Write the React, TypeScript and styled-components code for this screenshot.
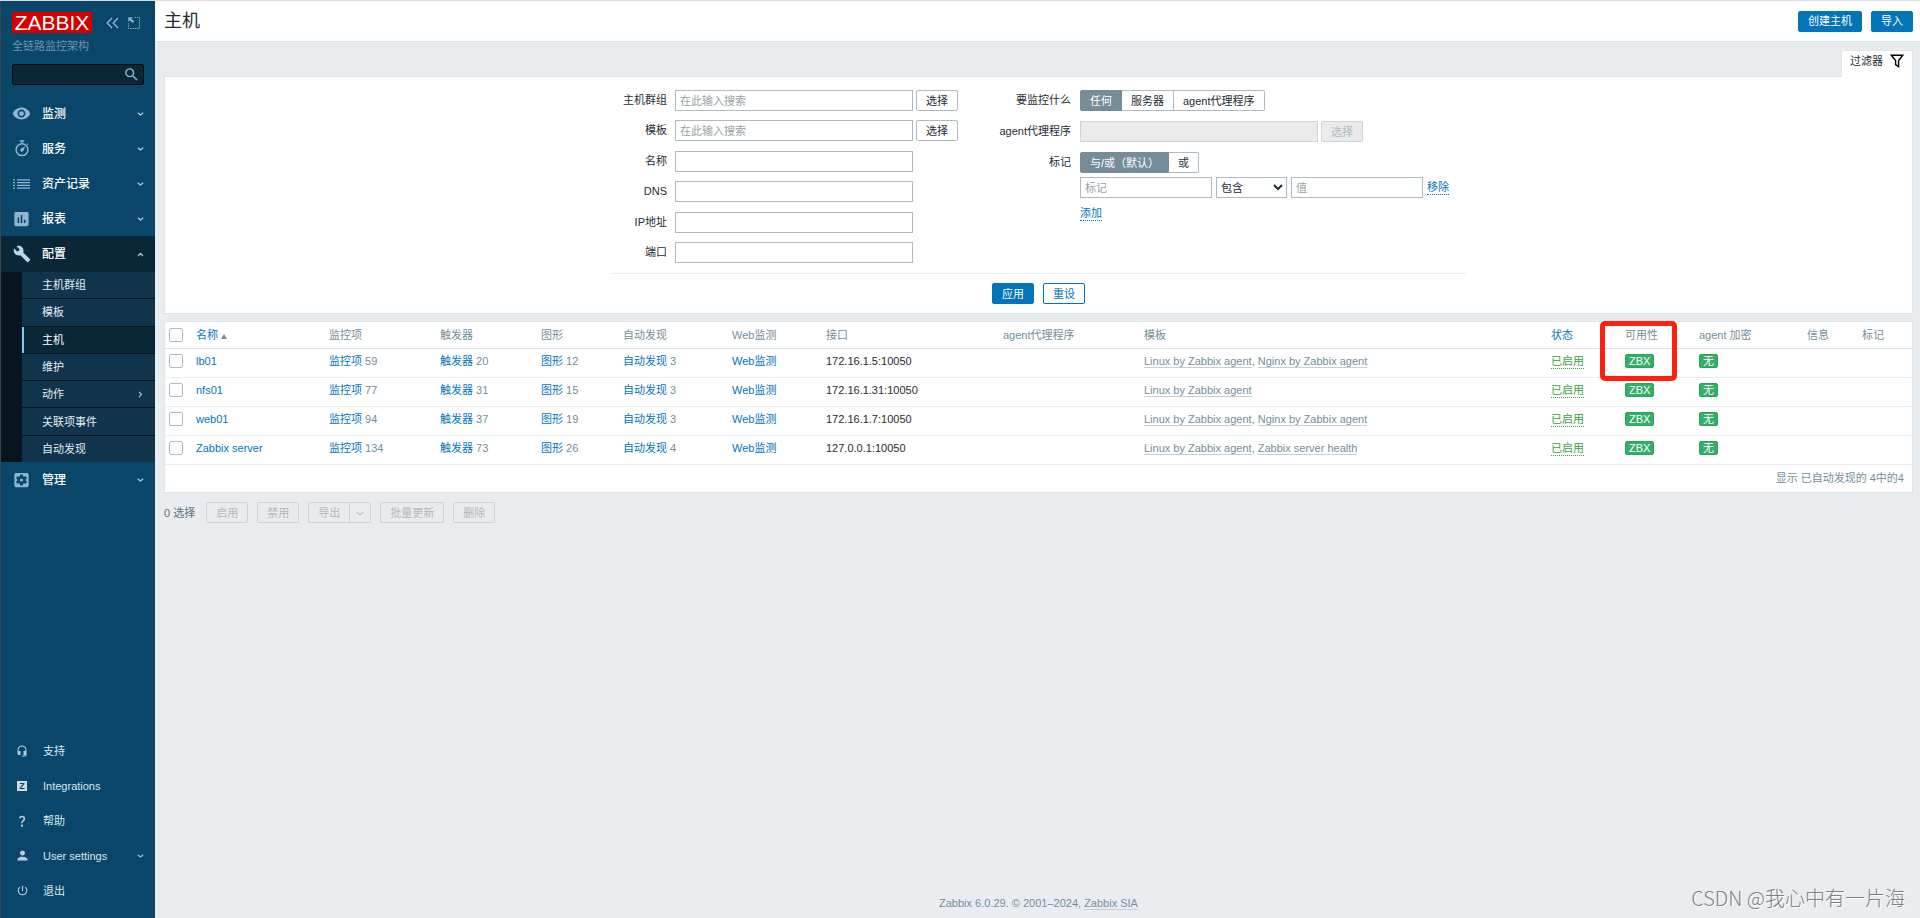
import React from 'react';
import styled, { createGlobalStyle, css } from 'styled-components';
import {
  MdAssessment,
  MdBuild,
  MdHeadsetMic,
  MdPerson,
  MdPowerSettingsNew,
  MdQuestionMark,
  MdSearch,
  MdSettingsApplications,
  MdVisibility,
} from 'react-icons/md';

const c = {
  bg: '#e9edf0',
  line: '#dfe4e7',
  rowLine: '#ebeef0',
  text: '#1f2c33',
  grey: '#768d99',
  blue: '#0275b8',
  field: '#acbbc2',
  green: '#429e47',
  badge: '#34af67',
  side: '#0a466a',
  sideDark: '#0a2737',
  sideIcon: '#8fb5cf',
};

const GlobalStyle = createGlobalStyle`
  * { box-sizing: border-box; }
  body {
    margin: 0;
    background: ${c.bg};
    color: ${c.text};
  }
  body, button, input, select {
    font-family: "Liberation Sans", Arial, "Noto Sans CJK SC", sans-serif;
    font-size: 11px;
    line-height: 14px;
  }
  ul { list-style: none; margin: 0; padding: 0; }
  a { text-decoration: none; color: inherit; }
  svg { display: block; }
`;

const Page = styled.div`
  position: relative;
  display: flex;
  min-height: 100vh;
  border-top: 1px solid #dedede;
`;

/* ---------- Sidebar ---------- */

const Sidebar = styled.aside`
  flex: 0 0 155px;
  min-width: 0;
  display: flex;
  flex-direction: column;
  background: ${c.side};
  border-left: 1px solid #3f4447;
  padding: 11px 0 10px;
`;

const SideTop = styled.div`
  padding: 0 11px;
`;

const LogoRow = styled.div`
  display: flex;
  align-items: center;
`;

const Logo = styled.a`
  width: 80px;
  height: 21px;
  background: #d40000;
  color: #fff;
  font-size: 21px;
  line-height: 21px;
  text-align: center;
`;

const IconButton = styled.button`
  border: 0;
  padding: 0;
  background: none;
  color: ${c.sideIcon};
`;

const CollapseButton = styled(IconButton)`
  margin: 0 9px 0 14px;
`;

const ServerName = styled.div`
  margin-top: 6px;
  color: #6d93ab;
`;

const SearchBox = styled.form`
  display: flex;
  align-items: center;
  height: 21px;
  margin: 11px 0;
  padding-right: 3px;
  background: ${c.sideDark};
  border: 1px solid #020a0f;
  border-radius: 2px;
`;

const SearchInput = styled.input`
  flex: 1;
  width: 0;
  min-width: 0;
  border: 0;
  background: none;
  color: #fff;
`;

const NavLink = styled.a<{ $open?: boolean }>`
  display: flex;
  align-items: center;
  height: ${(p) => (p.$open ? 36 : 35)}px;
  padding: 0 11px;
  color: #fff;
  font-size: 12px;
  font-weight: 500;
  background: ${(p) => (p.$open ? c.sideDark : 'none')};
`;

const NavIcon = styled.span<{ $bright?: boolean }>`
  display: flex;
  justify-content: center;
  width: 19px;
  margin-right: 11px;
  color: ${(p) => (p.$bright ? '#b9d8ec' : c.sideIcon)};
`;

const NavLabel = styled.span`
  flex: 1;
`;

const Submenu = styled.ul`
  display: flex;
  flex-direction: column;
  min-height: 190px;
  padding-left: 21px;
  background: #06151e;
`;

const SubItem = styled.li`
  flex: 1;
  display: flex;
  & + & { border-top: 1px solid #06151e; }
`;

const SubLink = styled.a<{ $active?: boolean }>`
  flex: 1;
  display: flex;
  align-items: center;
  padding: 0 11px 0 18px;
  border-left: 2px solid ${(p) => (p.$active ? '#7cc9f5' : '#10344c')};
  background: ${(p) => (p.$active ? c.sideDark : '#10344c')};
  color: ${(p) => (p.$active ? '#fff' : '#e3edf3')};
`;

const BottomNav = styled.ul`
  margin-top: auto;
`;

const BottomLink = styled.a`
  display: flex;
  align-items: center;
  height: 35px;
  padding: 0 11px;
  color: #dbe6ec;
`;

const BottomIcon = styled.span`
  display: flex;
  justify-content: center;
  width: 20px;
  margin-right: 11px;
  color: #b9ccd8;
`;

const ZBox = styled.span`
  width: 10px;
  height: 10px;
  background: #cddbe3;
  color: ${c.side};
  font-size: 9px;
  font-weight: bold;
  line-height: 11px;
  text-align: center;
`;

/* ---------- Main ---------- */

const Main = styled.div`
  flex: 1;
  min-width: 0;
  display: flex;
  flex-direction: column;
`;

const Header = styled.header`
  display: flex;
  align-items: center;
  justify-content: space-between;
  height: 41px;
  padding: 0 7px 0 9px;
  background: #fff;
  border-bottom: 1px solid ${c.line};
`;

const Title = styled.h1`
  margin: 0;
  font-size: 18px;
  line-height: 24px;
  font-weight: normal;
`;

const ButtonRow = styled.div`
  display: flex;
  justify-content: center;
  gap: 9px;
`;

type Kind = 'primary' | 'outline' | 'plain';

const Button = styled.button<{ $kind?: Kind }>`
  height: 21px;
  padding: 0 9px;
  line-height: 18px;
  white-space: nowrap;
  border-radius: 2px;
  border: 1px solid ${c.blue};
  background: ${(p) => (p.$kind === 'primary' ? c.blue : '#fff')};
  color: ${(p) => (p.$kind === 'primary' ? '#fff' : c.blue)};
  ${(p) => p.$kind === 'plain' && css`
    border-color: ${c.field};
    color: ${c.text};
  `}
  &:disabled {
    background: #ebebeb;
    border-color: #ccd5d9;
    color: ${c.field};
  }
`;

const Content = styled.main`
  padding: 8px 7px 0 9px;
`;

const TabBar = styled.div`
  display: flex;
  justify-content: flex-end;
`;

const FilterTab = styled.button`
  position: relative;
  z-index: 1;
  display: flex;
  justify-content: space-between;
  width: 72px;
  height: 27px;
  margin-bottom: -1px;
  padding: 3px 8px 0 8px;
  background: #fff;
  color: ${c.text};
  border: 1px solid ${c.line};
  border-bottom: 0;
`;

const Panel = styled.section`
  position: relative;
  background: #fff;
  border: 1px solid ${c.line};
  margin-bottom: 7px;
`;

const FilterForm = styled.form`
  max-width: 855px;
  margin: 0 auto;
  padding: 13px 0 9px;
`;

const FilterColumns = styled.div`
  display: flex;
  gap: 32px;
  padding-bottom: 10px;
  border-bottom: 1px solid ${c.rowLine};
  margin-bottom: 9px;
`;

const LeftFields = styled.div`
  display: flex;
  flex-direction: column;
  justify-content: space-between;
  min-height: 173px;
`;

const RightFields = styled.div`
  display: flex;
  flex-direction: column;
  gap: 10px;
`;

const FieldRow = styled.div`
  display: flex;
`;

const FieldLabel = styled.label<{ $wide?: boolean }>`
  width: ${(p) => (p.$wide ? 81 : 56)}px;
  margin-right: ${(p) => (p.$wide ? 9 : 8)}px;
  line-height: 21px;
  text-align: right;
  white-space: nowrap;
`;

const TextInput = styled.input<{ $short?: boolean }>`
  width: ${(p) => (p.$short ? 132 : 238)}px;
  height: 21px;
  padding: 0 4px;
  border: 1px solid ${c.field};
  border-radius: 0;
  background: #fff;
  &::placeholder { color: #9a9fa3; }
  &:disabled { background: #ebebeb; border-color: #ccd5d9; }
`;

const PickButton = styled(Button)`
  margin-left: 3px;
`;

const Segments = styled.div`
  display: flex;
`;

const Segment = styled.label`
  display: block;
  & input {
    position: absolute;
    opacity: 0;
    pointer-events: none;
  }
  & span {
    display: block;
    height: 21px;
    padding: 0 9px;
    line-height: 20px;
    border: 1px solid ${c.field};
    border-left-width: 0;
    white-space: nowrap;
  }
  &:last-child span { border-radius: 0 2px 2px 0; }
  &:first-child span { border-radius: 2px 0 0 2px; border-left-width: 1px; }
  & input:checked + span {
    background: ${c.grey};
    border-color: ${c.grey};
    color: #fff;
  }
`;

const TagFields = styled.div`
  display: flex;
  flex-direction: column;
  align-items: flex-start;
  gap: 4px;
`;

const TagRow = styled.div`
  display: flex;
  align-items: center;
  gap: 4px;
`;

const Select = styled.select`
  width: 71px;
  height: 21px;
  border: 1px solid ${c.field};
  border-radius: 0;
  background: #fff;
  color: ${c.text};
`;

const DottedButton = styled.button<{ $green?: boolean }>`
  padding: 0;
  border: 0;
  border-bottom: 1px dotted ${(p) => (p.$green ? c.green : c.blue)};
  background: none;
  color: ${(p) => (p.$green ? c.green : c.blue)};
  line-height: 14px;
`;

const AddButton = styled(DottedButton)`
  margin-top: 4px;
`;

/* ---------- Table ---------- */

const Table = styled.table`
  width: 100%;
  table-layout: fixed;
  border-collapse: separate;
  border-spacing: 0;
`;

const Col = styled.col<{ $w?: number }>`
  width: ${(p) => (p.$w ? `${p.$w}px` : 'auto')};
`;

const Th = styled.th`
  height: 27px;
  padding: 0 5px;
  font-weight: normal;
  text-align: left;
  white-space: nowrap;
  color: ${c.grey};
  border-bottom: 1px solid ${c.line};
`;

const Td = styled.td`
  height: 29px;
  padding: 5px 5px 0;
  vertical-align: top;
  white-space: nowrap;
  border-bottom: 1px solid ${c.rowLine};
  color: ${c.grey};
`;

const InterfaceCell = styled(Td)`
  color: ${c.text};
`;

const Link = styled.a`
  color: ${c.blue};
`;

const GreyLink = styled.a`
  color: ${c.grey};
  border-bottom: 1px solid #c5cfd4;
`;

const SortArrow = styled.span`
  display: inline-block;
  margin-left: 3px;
  border: 3px solid transparent;
  border-top: 0;
  border-bottom: 5px solid ${c.grey};
`;

const Checkbox = styled.input`
  appearance: none;
  display: block;
  width: 14px;
  height: 14px;
  margin: 0 0 0 -1px;
  border: 1px solid ${c.field};
  border-radius: 2px;
  background: #fff;
`;

const Badge = styled.span`
  display: inline-block;
  height: 14px;
  padding: 0 3px;
  border: 1px solid #2f9f5e;
  border-radius: 2px;
  background: ${c.badge};
  color: #fff;
  line-height: 12px;
  vertical-align: top;
`;

const TableFooter = styled.div`
  height: 27px;
  padding: 0 8px;
  line-height: 27px;
  text-align: right;
  color: ${c.grey};
`;

const Highlight = styled.div`
  position: absolute;
  top: -1px;
  right: 235px;
  width: 77px;
  height: 60px;
  border: 5px solid #ff2012;
  border-radius: 5px;
  pointer-events: none;
`;

const Actions = styled.div`
  display: flex;
  align-items: center;
  gap: 9px;
  margin-top: 9px;
`;

const Selected = styled.span`
  color: #5d7480;
  margin-right: 2px;
`;

const SplitButton = styled.div`
  display: flex;
  & button:first-child { border-radius: 2px 0 0 2px; }
  & button:last-child {
    margin-left: -1px;
    padding: 0 6px;
    border-radius: 0 2px 2px 0;
  }
`;

const PageFooter = styled.footer`
  margin-top: auto;
  padding: 0 7px 8px 9px;
  text-align: center;
  color: ${c.grey};
`;

const Watermark = styled.div`
  position: absolute;
  right: 15px;
  bottom: 7px;
  font-family: "Noto Sans CJK SC", sans-serif;
  font-size: 20px;
  font-weight: 300;
  line-height: 26px;
  color: #7d8184;
  text-shadow: 1px 1px 0 #fff;
`;

/* ---------- Icons ---------- */

const ChevronSvg = styled.svg`
  opacity: 0.75;
`;

const Chevron = ({ dir = 'down', size = 7 }: { dir?: 'down' | 'up' | 'right'; size?: number }) => (
  <ChevronSvg width={size} height={size} viewBox="0 0 7 7" fill="none" stroke="currentColor" strokeWidth="1.1">
    <path d={{ down: 'M.8 2.8 3.5 5 6.2 2.8', up: 'M1 5 3.5 2.4 6 5', right: 'M2 1 4.6 3.5 2 6' }[dir]} />
  </ChevronSvg>
);

const CollapseIcon = () => (
  <svg width="13" height="12" viewBox="0 0 13 12" fill="none" stroke="currentColor" strokeWidth="1.4">
    <path d="M6 1 1.2 6 6 11M12 1 7.2 6 12 11" />
  </svg>
);

const CompactIcon = () => (
  <svg width="12" height="12" viewBox="0 0 12 12" fill="none" stroke="currentColor">
    <path d="M6.5.5H11.5V11.5H.5V6.5" strokeDasharray="1.4 1" />
    <path d="M.3.3H5L3.5 1.8 6.2 4.6 4.8 6 1.9 3.3.3 5z" fill="currentColor" stroke="none" />
  </svg>
);

const StopwatchIcon = () => (
  <svg width="14" height="17" viewBox="0 0 14 17" fill="none" stroke="currentColor">
    <circle cx="7" cy="9.7" r="5.9" strokeWidth="1.5" />
    <path d="M4.8.9H9.2" strokeWidth="1.5" />
    <path d="M7 1V3.5M11.8 3.6 12.8 4.6" strokeWidth="1.3" />
    <path d="M10.2 6.3 8.3 11A1.7 1.7 0 1 1 5.8 8.7z" fill="currentColor" stroke="none" />
  </svg>
);

const ListIcon = () => (
  <svg width="17" height="10" viewBox="0 0 17 10" fill="none" stroke="currentColor" strokeWidth="1.3">
    <path d="M4 .8H17M4 3.6H17M4 6.4H17M4 9.2H17" />
    <path d="M0 .8H2M0 3.6H2M0 6.4H2M0 9.2H2" />
  </svg>
);

const FunnelIcon = () => (
  <svg width="14" height="14" viewBox="0 0 14 14" fill="none" stroke="#000" strokeWidth="1.4">
    <path d="M1.3 1.2H12.7L8.6 6.5V12.6L5.6 10.6V6.5z" />
  </svg>
);

/* ---------- Data ---------- */

const subItems = ['主机群组', '模板', '主机', '维护', '动作', '关联项事件', '自动发现'];

const leftFields = [
  { id: 'groups', label: '主机群组', pick: true },
  { id: 'templates', label: '模板', pick: true },
  { id: 'name', label: '名称' },
  { id: 'dns', label: 'DNS' },
  { id: 'ip', label: 'IP地址' },
  { id: 'port', label: '端口' },
];

const columnWidths = [26, 133, 111, 101, 82, 109, 94, 177, 141, undefined, 74, 74, 108, 55, 55];

const hosts = [
  { name: 'lb01', items: 59, triggers: 20, graphs: 12, discovery: 3, iface: '172.16.1.5:10050', templates: ['Linux by Zabbix agent', 'Nginx by Zabbix agent'] },
  { name: 'nfs01', items: 77, triggers: 31, graphs: 15, discovery: 3, iface: '172.16.1.31:10050', templates: ['Linux by Zabbix agent'] },
  { name: 'web01', items: 94, triggers: 37, graphs: 19, discovery: 3, iface: '172.16.1.7:10050', templates: ['Linux by Zabbix agent', 'Nginx by Zabbix agent'] },
  { name: 'Zabbix server', items: 134, triggers: 73, graphs: 26, discovery: 4, iface: '127.0.0.1:10050', templates: ['Linux by Zabbix agent', 'Zabbix server health'] },
];

interface NavItemProps {
  icon: React.ReactNode;
  label: string;
  open?: boolean;
}

const NavItem = ({ icon, label, open }: NavItemProps) => (
  <NavLink href="#" $open={open}>
    <NavIcon $bright={open}>{icon}</NavIcon>
    <NavLabel>{label}</NavLabel>
    <Chevron dir={open ? 'up' : 'down'} />
  </NavLink>
);

const BottomItem = ({ icon, label, more }: { icon: React.ReactNode; label: string; more?: boolean }) => (
  <li>
    <BottomLink href="#">
      <BottomIcon>{icon}</BottomIcon>
      <NavLabel>{label}</NavLabel>
      {more && <Chevron />}
    </BottomLink>
  </li>
);

const SegmentGroup = ({ name, label, options }: { name: string; label: string; options: string[] }) => (
  <Segments role="radiogroup" aria-label={label}>
    {options.map((option, i) => (
      <Segment key={option}>
        <input type="radio" name={name} defaultChecked={i === 0} />
        <span>{option}</span>
      </Segment>
    ))}
  </Segments>
);

export default function App() {
  return (
    <Page>
      <GlobalStyle />
      <Sidebar>
        <SideTop>
          <LogoRow>
            <Logo href="#">ZABBIX</Logo>
            <CollapseButton aria-label="折叠"><CollapseIcon /></CollapseButton>
            <IconButton aria-label="隐藏"><CompactIcon /></IconButton>
          </LogoRow>
          <ServerName>全链路监控架构</ServerName>
          <SearchBox>
            <SearchInput aria-label="搜索" />
            <IconButton type="button" aria-label="搜索"><MdSearch size={17} /></IconButton>
          </SearchBox>
        </SideTop>
        <nav>
          <NavItem icon={<MdVisibility size={21} />} label="监测" />
          <NavItem icon={<StopwatchIcon />} label="服务" />
          <NavItem icon={<ListIcon />} label="资产记录" />
          <NavItem icon={<MdAssessment size={22} />} label="报表" />
          <NavItem icon={<MdBuild size={18} />} label="配置" open />
          <Submenu>
            {subItems.map((item) => (
              <SubItem key={item}>
                <SubLink href="#" $active={item === '主机'}>
                  <NavLabel>{item}</NavLabel>
                  {item === '动作' && <Chevron dir="right" />}
                </SubLink>
              </SubItem>
            ))}
          </Submenu>
          <NavItem icon={<MdSettingsApplications size={22} />} label="管理" />
        </nav>
        <BottomNav>
          <BottomItem icon={<MdHeadsetMic size={12} />} label="支持" />
          <BottomItem icon={<ZBox>Z</ZBox>} label="Integrations" />
          <BottomItem icon={<MdQuestionMark size={14} />} label="帮助" />
          <BottomItem icon={<MdPerson size={15} />} label="User settings" more />
          <BottomItem icon={<MdPowerSettingsNew size={13} />} label="退出" />
        </BottomNav>
      </Sidebar>

      <Main>
        <Header>
          <Title>主机</Title>
          <ButtonRow>
            <Button $kind="primary">创建主机</Button>
            <Button $kind="primary">导入</Button>
          </ButtonRow>
        </Header>

        <Content>
          <TabBar>
            <FilterTab>过滤器<FunnelIcon /></FilterTab>
          </TabBar>
          <Panel>
            <FilterForm>
              <FilterColumns>
                <LeftFields>
                  {leftFields.map((f) => (
                    <FieldRow key={f.id}>
                      <FieldLabel htmlFor={f.id}>{f.label}</FieldLabel>
                      <TextInput id={f.id} placeholder={f.pick ? '在此输入搜索' : undefined} />
                      {f.pick && <PickButton type="button" $kind="plain">选择</PickButton>}
                    </FieldRow>
                  ))}
                </LeftFields>
                <RightFields>
                  <FieldRow>
                    <FieldLabel as="span" $wide>要监控什么</FieldLabel>
                    <SegmentGroup name="monitored" label="要监控什么" options={['任何', '服务器', 'agent代理程序']} />
                  </FieldRow>
                  <FieldRow>
                    <FieldLabel htmlFor="proxy" $wide>agent代理程序</FieldLabel>
                    <TextInput id="proxy" disabled />
                    <PickButton type="button" $kind="plain" disabled>选择</PickButton>
                  </FieldRow>
                  <FieldRow>
                    <FieldLabel as="span" $wide>标记</FieldLabel>
                    <TagFields>
                      <SegmentGroup name="evaltype" label="标记" options={['与/或（默认）', '或']} />
                      <TagRow>
                        <TextInput $short placeholder="标记" aria-label="标记" />
                        <Select aria-label="运算符" defaultValue="包含">
                          <option>包含</option>
                        </Select>
                        <TextInput $short placeholder="值" aria-label="值" />
                        <DottedButton type="button">移除</DottedButton>
                      </TagRow>
                      <AddButton type="button">添加</AddButton>
                    </TagFields>
                  </FieldRow>
                </RightFields>
              </FilterColumns>
              <ButtonRow>
                <Button type="button" $kind="primary">应用</Button>
                <Button type="button" $kind="outline">重设</Button>
              </ButtonRow>
            </FilterForm>
          </Panel>

          <Panel>
            <Table>
              <colgroup>
                {columnWidths.map((w, i) => <Col key={i} $w={w} />)}
              </colgroup>
              <thead>
                <tr>
                  <Th><Checkbox type="checkbox" aria-label="全选" /></Th>
                  <Th><Link href="#">名称<SortArrow /></Link></Th>
                  <Th>监控项</Th>
                  <Th>触发器</Th>
                  <Th>图形</Th>
                  <Th>自动发现</Th>
                  <Th>Web监测</Th>
                  <Th>接口</Th>
                  <Th>agent代理程序</Th>
                  <Th>模板</Th>
                  <Th><Link href="#">状态</Link></Th>
                  <Th>可用性</Th>
                  <Th>agent 加密</Th>
                  <Th>信息</Th>
                  <Th>标记</Th>
                </tr>
              </thead>
              <tbody>
                {hosts.map((h) => (
                  <tr key={h.name}>
                    <Td><Checkbox type="checkbox" aria-label={h.name} /></Td>
                    <Td><Link href="#">{h.name}</Link></Td>
                    <Td><Link href="#">监控项</Link> {h.items}</Td>
                    <Td><Link href="#">触发器</Link> {h.triggers}</Td>
                    <Td><Link href="#">图形</Link> {h.graphs}</Td>
                    <Td><Link href="#">自动发现</Link> {h.discovery}</Td>
                    <Td><Link href="#">Web监测</Link></Td>
                    <InterfaceCell>{h.iface}</InterfaceCell>
                    <Td />
                    <Td>
                      {h.templates.map((t, i) => (
                        <React.Fragment key={t}>
                          {i > 0 && ', '}
                          <GreyLink href="#">{t}</GreyLink>
                        </React.Fragment>
                      ))}
                    </Td>
                    <Td><DottedButton $green>已启用</DottedButton></Td>
                    <Td><Badge>ZBX</Badge></Td>
                    <Td><Badge>无</Badge></Td>
                    <Td />
                    <Td />
                  </tr>
                ))}
              </tbody>
            </Table>
            <TableFooter>显示 已自动发现的 4中的4</TableFooter>
            <Highlight />
          </Panel>

          <Actions>
            <Selected>0 选择</Selected>
            <Button disabled>启用</Button>
            <Button disabled>禁用</Button>
            <SplitButton>
              <Button disabled>导出</Button>
              <Button disabled aria-label="更多"><Chevron size={8} /></Button>
            </SplitButton>
            <Button disabled>批量更新</Button>
            <Button disabled>删除</Button>
          </Actions>
        </Content>

        <PageFooter>
          Zabbix 6.0.29. © 2001–2024, <GreyLink href="#">Zabbix SIA</GreyLink>
        </PageFooter>
      </Main>
      <Watermark>CSDN @我心中有一片海</Watermark>
    </Page>
  );
}
